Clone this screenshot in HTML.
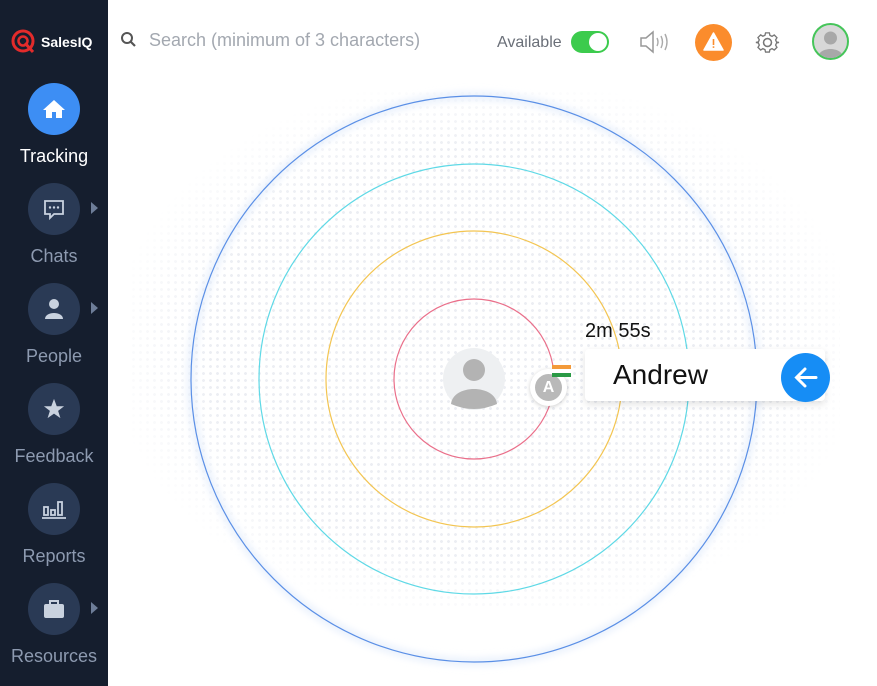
<!DOCTYPE html>
<html><head><meta charset="utf-8"><style>
*{margin:0;padding:0;box-sizing:border-box}
body{width:877px;height:686px;overflow:hidden;background:#fff;font-family:"Liberation Sans",sans-serif;position:relative}
.side{position:absolute;left:0;top:0;width:108px;height:686px;background:#151e2e}
.logo{position:absolute;left:11px;top:29px;display:flex;align-items:center;color:#fff;font-weight:bold;font-size:14px}
.circ{position:absolute;left:28px;width:52px;height:52px;border-radius:50%;background:#2a3a55;display:flex;align-items:center;justify-content:center}
.lbl{position:absolute;width:108px;text-align:center;color:#8d9ab0;font-size:18px}
.arr{position:absolute;left:91px;width:0;height:0;border-left:7px solid #6d7d98;border-top:6px solid transparent;border-bottom:6px solid transparent}
.dots{position:absolute;left:130px;top:90px;width:710px;height:520px;background-image:radial-gradient(#eceef3 1.3px,transparent 1.6px);background-size:7px 7px;-webkit-mask-image:radial-gradient(ellipse at center,#000 55%,transparent 75%);mask-image:radial-gradient(ellipse at center,#000 55%,transparent 75%)}
</style></head><body>
<div class="dots"></div>
<div class="side">
 <div class="logo"><svg width="28" height="26" viewBox="0 0 28 26"><circle cx="12" cy="12" r="10" fill="none" stroke="#e32b2b" stroke-width="3"/><circle cx="12" cy="12" r="4.5" fill="none" stroke="#e32b2b" stroke-width="2.5"/><path d="M14 14 L22 23" stroke="#e32b2b" stroke-width="3"/></svg><span style="margin-left:2px">SalesIQ</span></div>
 <div class="circ" style="top:83px;background:#3d8ef4"><svg width="24" height="22" viewBox="0 0 24 22"><path d="M12 2 L23 12 H20 V20 H4 V12 H1 Z" fill="#fff"/><rect x="10" y="14" width="4" height="6" fill="#3d8ef4"/></svg></div>
 <div class="lbl" style="top:146px;color:#fff">Tracking</div>
 <div class="circ" style="top:183px"><svg width="24" height="24" viewBox="0 0 24 24"><path d="M3 4 H21 V17 H12 L8 21 V17 H3 Z" fill="none" stroke="#c9d2df" stroke-width="1.8"/><circle cx="8" cy="10.5" r="1.2" fill="#c9d2df"/><circle cx="12" cy="10.5" r="1.2" fill="#c9d2df"/><circle cx="16" cy="10.5" r="1.2" fill="#c9d2df"/></svg></div>
 <div class="arr" style="top:202px"></div>
 <div class="lbl" style="top:246px">Chats</div>
 <div class="circ" style="top:283px"><svg width="22" height="22" viewBox="0 0 22 22"><circle cx="11" cy="6" r="5" fill="#c9d2df"/><path d="M2 21 C2 13 20 13 20 21 Z" fill="#c9d2df"/></svg></div>
 <div class="arr" style="top:302px"></div>
 <div class="lbl" style="top:346px">People</div>
 <div class="circ" style="top:383px"><svg width="22" height="22" viewBox="0 0 24 24"><path d="M12 1 L15 9 L23 9 L16.5 14 L19 22 L12 17 L5 22 L7.5 14 L1 9 L9 9 Z" fill="#c9d2df"/></svg></div>
 <div class="lbl" style="top:446px">Feedback</div>
 <div class="circ" style="top:483px"><svg width="26" height="22" viewBox="0 0 26 22"><g fill="none" stroke="#c9d2df" stroke-width="1.8"><rect x="3" y="9" width="4" height="8"/><rect x="10" y="12" width="4" height="5"/><rect x="17" y="4" width="4" height="13"/></g><path d="M1 20 H25" stroke="#c9d2df" stroke-width="1.8"/></svg></div>
 <div class="lbl" style="top:546px">Reports</div>
 <div class="circ" style="top:583px"><svg width="24" height="22" viewBox="0 0 24 22"><rect x="2" y="6" width="20" height="14" rx="2" fill="#c9d2df"/><path d="M8 6 V3 H16 V6" fill="none" stroke="#c9d2df" stroke-width="2"/></svg></div>
 <div class="arr" style="top:602px"></div>
 <div class="lbl" style="top:646px">Resources</div>
</div>
<svg style="position:absolute;left:120px;top:31px" width="18" height="18" viewBox="0 0 18 18"><circle cx="7" cy="7" r="5" fill="none" stroke="#555" stroke-width="2"/><path d="M11 11 L15 15" stroke="#555" stroke-width="2.2"/></svg>
<div style="position:absolute;left:149px;top:30px;font-size:18px;color:#a3a8b0">Search (minimum of 3 characters)</div>
<div style="position:absolute;left:497px;top:34px;font-size:16px;color:#6a6f78">Available</div>
<div style="position:absolute;left:571px;top:31px;width:38px;height:22px;border-radius:11px;background:#3ccb4d"><div style="position:absolute;right:2px;top:2px;width:18px;height:18px;border-radius:50%;background:#fff"></div></div>
<svg style="position:absolute;left:638px;top:29px" width="32" height="26" viewBox="0 0 32 26"><path d="M3 9 H8 L15 3 V23 L8 17 H3 Z" fill="none" stroke="#999" stroke-width="1.5"/><path d="M19 9 Q21 13 19 17 M23 7 Q26 13 23 19 M27 5 Q31 13 27 21" fill="none" stroke="#aaa" stroke-width="1.4"/></svg>
<div style="position:absolute;left:695px;top:24px;width:37px;height:37px;border-radius:50%;background:#fb8c2c"></div>
<svg style="position:absolute;left:703px;top:32px" width="21" height="19" viewBox="0 0 21 19"><path d="M10.5 1 L20 18 H1 Z" fill="#fff" stroke="#fff" stroke-linejoin="round" stroke-width="1.5"/><rect x="9.7" y="7" width="1.6" height="6" fill="#fb8c2c"/><rect x="9.7" y="14.3" width="1.6" height="1.6" fill="#fb8c2c"/></svg>
<svg style="position:absolute;left:755px;top:30px" width="25" height="25" viewBox="0 0 24 24"><path d="M10 2h4l.6 2.6 2.2 1 2.3-1.4 2.8 2.8-1.4 2.3 1 2.2L24 12v0l-2.5.6-1 2.2 1.4 2.3-2.8 2.8-2.3-1.4-2.2 1L14 22h-4l-.6-2.5-2.2-1-2.3 1.4-2.8-2.8 1.4-2.3-1-2.2L0 12l2.5-.6 1-2.2L2.1 6.9 4.9 4.1l2.3 1.4 2.2-1z" fill="none" stroke="#777" stroke-width="1.4" transform="scale(.92) translate(1,1)"/><circle cx="12" cy="12" r="3.8" fill="none" stroke="#777" stroke-width="1.5"/></svg>
<div style="position:absolute;left:812px;top:23px;width:37px;height:37px;border-radius:50%;border:2px solid #46c55a;background:#d8d8d8;overflow:hidden"><svg width="33" height="33" viewBox="0 0 33 33"><circle cx="16.5" cy="13" r="6.5" fill="#a8a8a8"/><path d="M4 33 C4 21 29 21 29 33Z" fill="#a8a8a8"/></svg></div>
<svg style="position:absolute;left:0;top:0" width="877" height="686">
<defs><filter id="g" x="-20%" y="-20%" width="140%" height="140%"><feGaussianBlur stdDeviation="4"/></filter></defs>
<circle cx="474" cy="379" r="283" fill="none" stroke="#e2ecfb" stroke-width="6" filter="url(#g)"/>
<circle cx="474" cy="379" r="283" fill="none" stroke="#5a8fe6" stroke-width="1.2"/>
<circle cx="474" cy="379" r="215" fill="none" stroke="#5fd9e6" stroke-width="1.2"/>
<circle cx="474" cy="379" r="148" fill="none" stroke="#f3c552" stroke-width="1.2"/>
<circle cx="474" cy="379" r="80" fill="none" stroke="#ea6f8a" stroke-width="1.2"/>
<circle cx="474" cy="379" r="31" fill="#eef0f2"/>
<circle cx="474" cy="370" r="11" fill="#b3b3b3"/>
<path d="M451 404 C453 384 495 384 497 404 Q474 414 451 404Z" fill="#b3b3b3"/>
</svg>
<div style="position:absolute;left:585px;top:320px;font-size:20px;color:#111">2m 55s</div>
<div style="position:absolute;left:585px;top:349px;width:240px;height:52px;background:#fff;border-radius:4px;box-shadow:0 3px 8px rgba(0,0,0,.12)"></div>
<div style="position:absolute;left:613px;top:359px;font-size:28px;color:#111">Andrew</div>
<div style="position:absolute;left:781px;top:353px;width:49px;height:49px;border-radius:50%;background:#168df5"><svg width="49" height="49" viewBox="0 0 49 49"><path d="M35 24.5 H16 M24 16 L15.5 24.5 L24 33" fill="none" stroke="#fff" stroke-width="3" stroke-linecap="round"/></svg></div>
<div style="position:absolute;left:530px;top:369px;width:37px;height:37px;border-radius:50%;background:#fff;box-shadow:0 1px 4px rgba(0,0,0,.2)"><div style="position:absolute;left:5px;top:5px;width:27px;height:27px;border-radius:50%;background:#b9b9b9;color:#fff;font-weight:bold;font-size:16px;text-align:center;line-height:27px">A</div></div>
<div style="position:absolute;left:552px;top:365px;width:19px;height:12px"><div style="height:4px;background:#f39a3a"></div><div style="height:4px;background:#fff"></div><div style="height:4px;background:#2a9a45"></div></div>
</body></html>
